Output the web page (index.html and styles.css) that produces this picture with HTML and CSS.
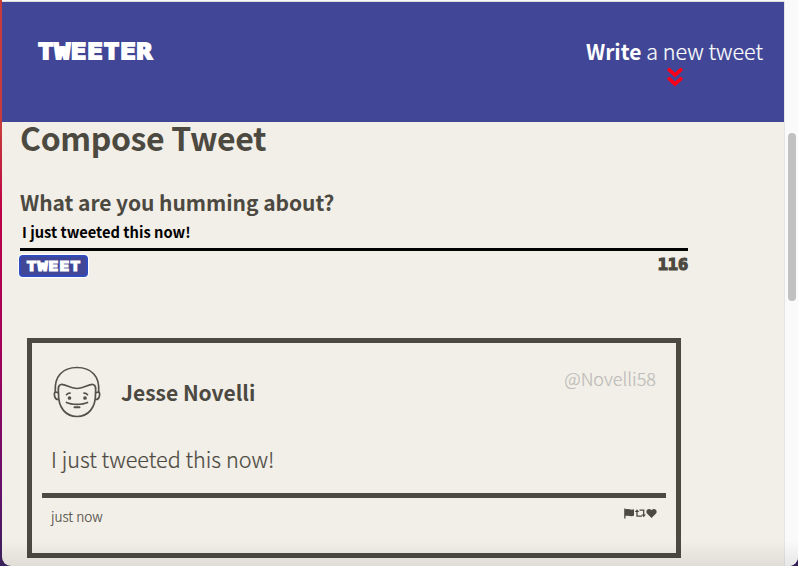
FILE: index.html
```html
<!DOCTYPE html>
<html lang="en">
<head>
<meta charset="utf-8">
<title>Tweeter</title>
<link rel="stylesheet" href="styles.css">
</head>
<body>
<div class="window">
  <div class="page">
    <nav class="nav">
      <span class="logo">TWEETER</span>
      <div class="write">
        <span class="write-text"><b>Write</b> a new tweet</span>
        <svg class="chevrons" viewBox="0 0 16 20" width="16" height="20"><path d="M2.3 2.8 8 8l5.700-5.200M2.300 11.800 8 17l5.700-5.200" fill="none" stroke="#fb0018" stroke-width="3.700" stroke-linecap="round"/></svg>
      </div>
    </nav>
    <main class="container">
      <section class="compose">
        <h2 class="title"><span>Compose Tweet</span></h2>
        <label class="prompt"><span>What are you humming about?</span></label>
        <div class="input"><span>I just tweeted this now!</span></div>
        <div class="actions">
          <button class="submit"><span>TWEET</span></button>
          <output class="counter">116</output>
        </div>
      </section>
      <article class="tweet">
        <header class="tweet-head">
          <svg class="avatar" viewBox="0 0 48 52" width="48" height="52" fill="none" stroke="#545149" stroke-width="1.700" stroke-linecap="round" stroke-linejoin="round">
            <path d="M2.300 26C1 10 10 1.500 24 1.500S47 10 45.700 26"/>
            <path d="M5.500 27C5 22 5 19 8 18.500c5-.5 8 4 16 4s11-4.500 16-4c3 .5 3 3.500 2.500 8.500C43 42 35 50.500 24 50.500S5 42 5.500 27Z"/>
            <path d="M4.500 26.500c-3-1.500-3.500 1-3 3 .4 2.500 1.500 4 3.500 4M43.500 26.500c3-1.500 3.500 1 3 3-.4 2.500-1.500 4-3.500 4"/>
            <path d="M13.500 28.700c1-1.200 2-1.600 3.500-1.500M34.500 28.700c-1-1.200-2-1.600-3.500-1.500M13.500 36.500c5 2.500 16 2.500 21 0"/>
            <path d="M21.500 41.300h5" stroke-width="2"/>
            <circle cx="16.500" cy="32" r="1" fill="#545149"/><circle cx="32" cy="32" r="1" fill="#545149"/>
          </svg>
          <h3 class="name">Jesse Novelli</h3>
          <span class="handle">@Novelli58</span>
        </header>
        <p class="body"><span>I just tweeted this now!</span></p>
        <footer class="tweet-foot">
          <span class="time">just now</span>
          <svg class="icons" viewBox="0 0 33 11" width="33" height="11">
            <path d="M.2.5h1.300v10H.2ZM1.500 1.500c3-1.300 5 1 8.500-.2v6.500c-3.500 1.200-5.500-1-8.500.2Z" fill="#4c4941"/>
            <path d="M13 3v5.200h5M15.500 2.200h4.200v5.500" fill="none" stroke="#4c4941" stroke-width="1.300"/>
            <path d="M10.700 4 13 1.300 15.300 4ZM17.500 6.500h4.400L19.700 9.200Z" fill="#4c4941"/>
            <path d="M27.500 10 23 5.500C20.800 2.500 24.800-.8 27.500 2.300 30.200-.8 34.200 2.500 32 5.500Z" fill="#4c4941"/>
          </svg>
        </footer>
      </article>
    </main>
  </div>
  <div class="scrollbar"><div class="thumb"></div></div>
  <div class="shade"></div>
</div>
</body>
</html>
```
FILE: styles.css
```css
* { box-sizing: border-box; }
body {
  margin: 0;
  width: 798px;
  height: 566px;
  overflow: hidden;
  padding-left: 2px;
  background: linear-gradient(#c63b3c 0, #c63b3c 130px, #bd0047 210px, #a3005a 350px, #65106b 490px, #38205a 566px);
  font-family: "Noto Sans CJK JP", "Noto Sans", sans-serif;
  color: #4c4941;
}
h2, h3, p { margin: 0; }
.window {
  position: relative;
  display: flex;
  height: 566px;
  border-top: 1px solid #fafafa;
  border-radius: 0 0 9px 9px;
  overflow: hidden;
  background: #f2efe8;
}
.page { width: 782px; border-top: 1px solid #dcdcdf; }
.nav {
  position: relative;
  z-index: 1;
  display: flex;
  justify-content: space-between;
  height: 120px;
  padding: 36px 21px 0 36px;
  background: #414796;
  color: #fff;
}
.logo, .submit, .counter {
  font-family: "DejaVu Sans Mono", monospace;
  font-weight: 700;
}
.logo {
  padding-top: 1px;
  font-size: 22px;
  line-height: 26px;
  letter-spacing: .8px;
  transform: scaleX(1.170);
  transform-origin: 0 50%;
  -webkit-text-stroke: 1.900px #fff;
}
.write { width: 177px; }
.write-text {
  display: block;
  height: 28px;
  font-size: 21.500px;
  line-height: 25px;
  font-weight: 300;
  white-space: nowrap;
  -webkit-text-stroke: .2px #fff;
}
.write-text b { font-size: 21px; font-weight: 700; -webkit-text-stroke: 0; }
.chevrons { display: block; margin: 1px auto 0 81px; }
.container { padding: 0 96px 0 18px; }
.title { height: 66px; margin-top: -5px; font-size: 32px; line-height: 40px; letter-spacing: -.35px; }
.prompt { display: block; height: 38px; padding-top: 5px; font-size: 21px; line-height: 28px; font-weight: 700; letter-spacing: -.05px; }
.input {
  height: 30px;
  padding: 0 2px;
  border-bottom: 3px solid #000;
  color: #000;
  font-size: 14.700px;
  line-height: 22px;
  font-weight: 700;
}
.actions { display: flex; justify-content: space-between; padding-top: 4px; }
.submit {
  width: 69px;
  height: 22px;
  margin-left: -1px;
  padding: 0;
  border: 2px solid #304bbd;
  border-radius: 4px;
  box-shadow: 0 0 0 1px #fff;
  background: #414796;
  color: #fff;
  font-size: 14px;
  line-height: 16px;
  letter-spacing: .7px;
  -webkit-text-stroke: 1.200px #fff;
}
.submit span { display: inline-block; transform: scaleX(1.2); }
.counter {
  padding-top: 1px;
  font-size: 15px;
  line-height: 18px;
  transform: scaleX(1.120);
  transform-origin: 100% 50%;
  -webkit-text-stroke: 1.200px #4c4941;
}
.tweet {
  width: 654px;
  height: 220px;
  margin: 61px 0 0 7px;
  padding: 0 10px;
  border: 5px solid #4c4941;
}
.tweet-head { display: flex; height: 100px; padding: 23px 10px 0 11px; }
.name { margin-left: 20px; padding-top: 10px; font-size: 21px; line-height: 32px; }
.handle { margin-left: auto; font-size: 18px; line-height: 24px; font-weight: 300; color: #bdbcb8; -webkit-text-stroke: .2px #bdbcb8; }
.body { height: 55px; padding: 0 9px; border-bottom: 5px solid #4c4941; font-size: 21.600px; line-height: 31px; font-weight: 300; -webkit-text-stroke: .2px #4c4941; }
.tweet-foot { display: flex; justify-content: space-between; padding: 9px 9px 0 9px; }
.time { font-size: 13.600px; line-height: 18px; font-weight: 300; -webkit-text-stroke: .15px #4c4941; }
.icons { margin-top: 1px; }
.scrollbar { width: 14px; border-left: 1px solid #e5e5e5; background: #fafafa; padding: 132px 0 0 3px; }
.thumb { width: 8px; height: 168px; border-radius: 4px; background: #c1c1c1; }
.shade {
  position: absolute;
  inset: auto 0 0;
  height: 26px;
  background: linear-gradient(rgba(0,0,0,0), rgba(0,0,0,.075));
}
```
